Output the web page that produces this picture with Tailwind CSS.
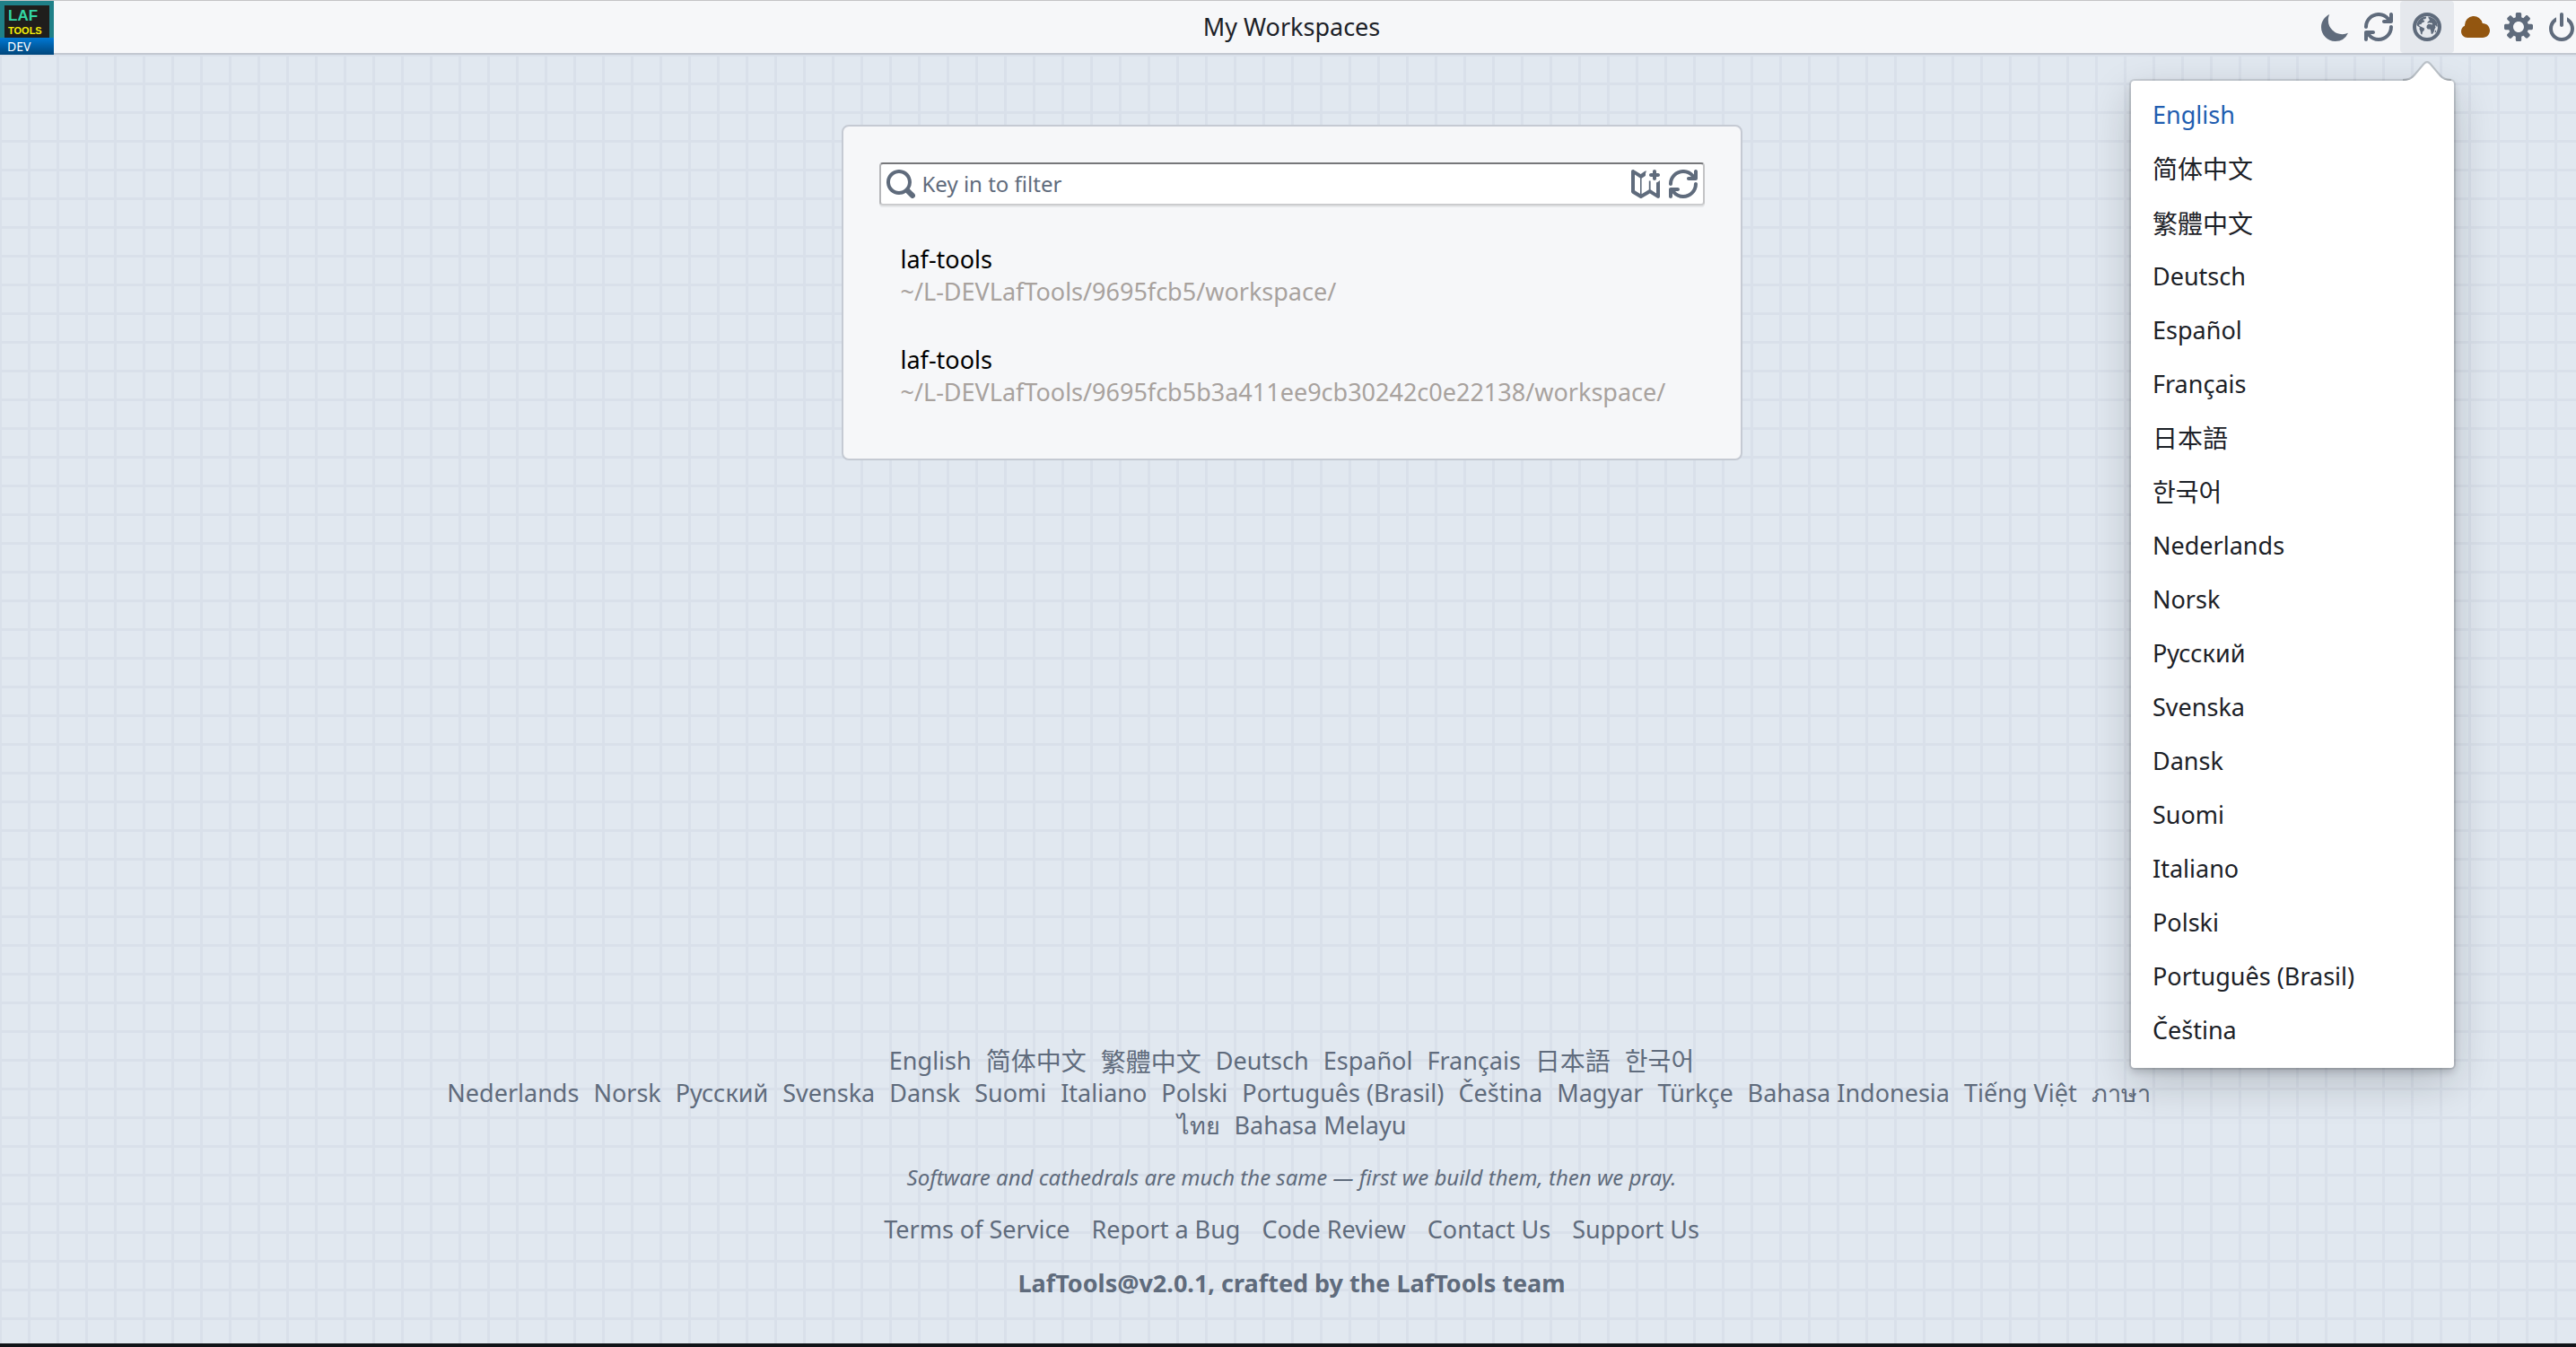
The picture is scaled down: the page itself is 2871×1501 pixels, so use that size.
<!DOCTYPE html>
<html lang="en">
<head>
<meta charset="utf-8">
<meta name="viewport" content="width=device-width, initial-scale=1">
<title>My Workspaces</title>
<script src="https://cdn.jsdelivr.net/npm/@tailwindcss/browser@4"></script>
</head>
<body class="flex min-h-screen flex-col overflow-x-hidden border-b-4 border-[#111418] bg-[#e1e8f0] bg-[linear-gradient(#d9e0ea_3px,transparent_3px),linear-gradient(90deg,#d9e0ea_3px,transparent_3px)] bg-[size:32px_32px] bg-[position:0px_28px,-1px_0px] font-['Noto_Sans','Noto_Sans_CJK_SC',sans-serif] text-[27px] leading-9 text-[#1c2127]">

<svg class="hidden" aria-hidden="true">
  <symbol id="refresh" viewBox="0 0 16 16"><path d="M14.99 6.99c-.55 0-1 .45-1 1 0 3.31-2.69 6-6 6-1.77 0-3.36-.78-4.46-2h1.46c.55 0 1-.45 1-1s-.45-1-1-1h-4c-.55 0-1 .45-1 1v4c0 .55.45 1 1 1s1-.45 1-1v-1.74a7.95 7.95 0 006 2.74c4.42 0 8-3.58 8-8 0-.55-.45-1-1-1zm0-7c-.55 0-1 .45-1 1v1.74a7.95 7.95 0 00-6-2.74c-4.42 0-8 3.58-8 8 0 .55.45 1 1 1s1-.45 1-1c0-3.31 2.69-6 6-6 1.77 0 3.36.78 4.46 2h-1.46c-.55 0-1 .45-1 1s.45 1 1 1h4c.55 0 1-.45 1-1v-4c0-.55-.45-1-1-1z"/></symbol>
</svg>

<header class="relative z-10 flex h-[61px] shrink-0 items-stretch border-t border-b-2 border-t-[#c4c4c6] border-b-[#c3c8d1] bg-[#f6f7f9]">
  <a href="#" aria-label="LafTools DEV" class="-mb-0.5 flex h-[60px] w-[60px] shrink-0 flex-col bg-[#1f8088] font-['Liberation_Sans',sans-serif]">
    <span class="mx-[5px] mt-[5px] flex h-9 flex-col bg-[#1f1e1c] pt-1 pl-1 font-bold">
      <span class="text-[17px] leading-4 text-[#33d6a4]">LAF</span>
      <span class="text-[11px] leading-4 text-[#f5ee0a]">TOOLS</span>
    </span>
    <span class="flex h-[19px] items-center bg-linear-to-b from-[#0078d4] to-[#00467c] pl-2 font-['Noto_Sans',sans-serif] text-sm leading-none text-white">DEV</span>
  </a>
  <div class="relative flex flex-1 items-center justify-end">
    <h1 class="pointer-events-none absolute inset-y-0 -left-[60px] right-0 flex items-center justify-center pl-2">My Workspaces</h1>
    <nav class="flex h-full items-center text-[#5f6b7c]" aria-label="Tools">
      <button type="button" aria-label="Dark mode" class="flex h-full w-12 items-center justify-center"><svg class="size-8 fill-current" viewBox="0 0 16 16"><path d="M15 11.38A7.835 7.835 0 017.85 16C3.51 16 0 12.49 0 8.15 0 4.97 1.89 2.23 4.62 1c-.45.99-.7 2.08-.7 3.23a7.85 7.85 0 007.85 7.85c1.15 0 2.24-.25 3.23-.7z"/></svg></button>
      <button type="button" aria-label="Refresh" class="flex h-full w-12 items-center justify-center"><svg class="size-8 fill-current"><use href="#refresh"/></svg></button>
      <div class="relative h-full">
        <button type="button" aria-label="Language" aria-expanded="true" class="flex h-full w-[60px] items-center justify-center rounded bg-[#e5e8ed]">
          <svg class="size-8" viewBox="0 0 16 16"><circle cx="8" cy="8" r="7" fill="none" stroke="currentColor" stroke-width="2"/><path fill="currentColor" d="M2.6 5.6C3.3 4 4.600 2.900 6 2.500L7.400 2.200 7.600 3 6.800 3.800 6.200 3.500 5.800 4.200 6.700 4.500 6.200 5.400 5.300 5.600 4.600 6.600 3.900 6.500 3.500 7.100 4.300 7.700 5.200 8.100 6.600 8.900 6.300 10 5.500 10.800 5.200 12.300 4.600 12 4.200 10.300 3.700 9.200 3.900 8.200 2.900 7.600 2.200 7zM8.600 2.300 10.600 2.700 12.200 3.700 13.400 5.300 13.900 7.200 13.600 8.200 13 7.200 12.400 7.300 12.800 8.300 12.200 9.200 11.900 10.500 11 12 10.300 11.800 10.100 10.200 9.700 9.300 8.400 9.200 7.700 8.400 7.900 7.100 8.800 6.400 10 6.500 10.900 6.800 11 6.300 10.400 5.700 9.700 5.900 9.100 5.600 8.300 6 8.200 5.400 8.900 4.700 9.600 4 9 3.600z"/><path d="M12.4 10.300l.6-.6.1 1-.7.7z" fill="currentColor"/></svg>
        </button>
        <div role="menu" aria-label="Language" class="absolute top-[89px] right-0 flex w-[360px] flex-col rounded-[4px] bg-white pt-2 pb-3 text-[#1c2127] shadow-[0_0_0_2px_rgba(17,20,24,0.1),0_4px_8px_rgba(17,20,24,0.2),0_16px_48px_rgba(17,20,24,0.2)]">
          <svg class="absolute -top-[23px] right-0 h-[25px] w-[60px]" viewBox="0 0 60 25" aria-hidden="true"><path d="M3 23C9 23 13 21 16 18L27 5Q30 2 33 5L44 18C47 21 51 23 57 23V25H3z" fill="#fff"/><path d="M3 22C9 22 13 20 15.500 17L26.500 4Q30 0 33.500 4L44.500 17C47 20 51 22 57 22" fill="none" stroke="#111418" stroke-opacity=".18" stroke-width="2"/></svg>
          <a href="#" role="menuitem" class="flex h-[60px] items-center px-6 text-[#215db0]">English</a>
          <a href="#" role="menuitem" lang="zh-CN" class="flex h-[60px] items-center px-6 text-[28px]">简体中文</a>
          <a href="#" role="menuitem" lang="zh-TW" class="flex h-[60px] items-center px-6 font-['Noto_Sans_CJK_SC',sans-serif] text-[28px]">繁體中文</a>
          <a href="#" role="menuitem" class="flex h-[60px] items-center px-6">Deutsch</a>
          <a href="#" role="menuitem" class="flex h-[60px] items-center px-6">Español</a>
          <a href="#" role="menuitem" class="flex h-[60px] items-center px-6">Français</a>
          <a href="#" role="menuitem" class="flex h-[60px] items-center px-6 text-[28px]">日本語</a>
          <a href="#" role="menuitem" class="flex h-[60px] items-center px-6 text-[28px]">한국어</a>
          <a href="#" role="menuitem" class="flex h-[60px] items-center px-6">Nederlands</a>
          <a href="#" role="menuitem" class="flex h-[60px] items-center px-6">Norsk</a>
          <a href="#" role="menuitem" class="flex h-[60px] items-center px-6">Русский</a>
          <a href="#" role="menuitem" class="flex h-[60px] items-center px-6">Svenska</a>
          <a href="#" role="menuitem" class="flex h-[60px] items-center px-6">Dansk</a>
          <a href="#" role="menuitem" class="flex h-[60px] items-center px-6">Suomi</a>
          <a href="#" role="menuitem" class="flex h-[60px] items-center px-6">Italiano</a>
          <a href="#" role="menuitem" class="flex h-[60px] items-center px-6">Polski</a>
          <a href="#" role="menuitem" class="flex h-[60px] items-center px-6">Português (Brasil)</a>
          <a href="#" role="menuitem" class="flex h-[60px] items-center px-6">Čeština</a>
        </div>
      </div>
      <button type="button" aria-label="Cloud" class="flex h-full w-12 items-center justify-center text-[#935610]"><svg class="size-8 fill-current" viewBox="0 0 16 16"><path d="M12 6c-.03 0-.07 0-.1.010A5 5 0 002 7c0 .11.010.22.020.33A3.510 3.510 0 000 10.500C0 12.430 1.570 14 3.500 14H12c2.210 0 4-1.790 4-4s-1.790-4-4-4z"/></svg></button>
      <button type="button" aria-label="Settings" class="flex h-full w-12 items-center justify-center"><svg class="size-8 fill-current" viewBox="0 0 16 16"><path d="M15.190 6.390h-1.850c-.11-.37-.27-.71-.45-1.040l1.360-1.360c.31-.31.31-.82 0-1.130l-1.130-1.130c-.31-.31-.82-.31-1.130 0l-1.360 1.360c-.33-.17-.67-.33-1.040-.44V.79c0-.44-.36-.8-.8-.8h-1.600c-.44 0-.8.36-.8.8v1.860c-.39.12-.75.28-1.100.47l-1.300-1.300c-.3-.3-.79-.3-1.090 0L1.820 2.910c-.3.3-.3.79 0 1.090l1.300 1.300c-.2.34-.36.7-.48 1.090H.79c-.44 0-.8.36-.8.8v1.600c0 .44.36.8.8.8h1.850c.11.37.27.71.45 1.040l-1.360 1.360c-.31.31-.31.82 0 1.130l1.130 1.130c.31.31.82.31 1.130 0l1.360-1.360c.33.18.67.33 1.040.44v1.860c0 .44.36.8.8.8h1.600c.44 0 .8-.36.8-.8v-1.860c.39-.12.75-.28 1.100-.47l1.300 1.300c.3.3.79.3 1.090 0l1.090-1.090c.3-.3.3-.79 0-1.090l-1.300-1.300c.19-.35.36-.71.48-1.100h1.850c.44 0 .8-.36.8-.8v-1.600a.816.816 0 00-.81-.79zm-7.200 4.600c-1.660 0-3-1.340-3-3s1.340-3 3-3 3 1.340 3 3-1.340 3-3 3z"/></svg></button>
      <button type="button" aria-label="Log out" class="flex h-full w-10 items-center justify-end"><svg class="size-8 fill-current" viewBox="0 0 16 16"><path d="M8 8c.55 0 1-.45 1-1V1c0-.55-.45-1-1-1S7 .45 7 1v6c0 .55.45 1 1 1zm3-5.320v2.340c1.210.91 2 2.350 2 3.980 0 2.760-2.240 5-5 5s-5-2.240-5-5c0-1.630.79-3.060 2-3.980V2.680C2.640 3.810 1 6.210 1 9c0 3.870 3.130 7 7 7s7-3.130 7-7c0-2.790-1.640-5.190-4-6.320z"/></svg></button>
    </nav>
  </div>
</header>

<main class="flex justify-center pt-[78px] pl-2">
  <section class="w-[1004px] rounded-lg border-2 border-[#c5cad3] bg-[#f6f7f9] px-10 pt-10 pb-14" aria-label="Workspaces">
    <label class="flex h-12 items-center gap-2 rounded border-2 border-t-[#76777a] border-r-[#c3c4c6] border-b-[#cbccce] border-l-[#b4b5b8] bg-white px-1.5 text-[#5f6b7c] shadow-[0_2px_0_#e5e7e9]">
      <svg class="size-8 shrink-0 fill-current" viewBox="0 0 16 16" aria-hidden="true"><path d="M15.550 13.430l-2.670-2.680a6.940 6.940 0 001.110-3.760c0-3.870-3.130-7-7-7s-7 3.130-7 7 3.130 7 7 7c1.390 0 2.680-.42 3.760-1.110l2.680 2.670a1.498 1.498 0 102.120-2.120zm-8.560-1.440c-2.760 0-5-2.240-5-5s2.240-5 5-5 5 2.240 5 5-2.240 5-5 5z"/></svg>
      <input type="text" aria-label="Filter workspaces" placeholder="Key in to filter" class="h-full min-w-0 flex-1 bg-transparent pb-0.5 text-2xl outline-none placeholder:text-[#5f6b7c]">
      <span class="flex gap-2.5">
        <button type="button" aria-label="New workspace" class="size-8"><svg class="size-8 fill-current" viewBox="0 0 16 16"><path fill-rule="evenodd" d="M0 1C0 .2.900-.300 1.600.200L5.300 2.500 7.600.900 8.600.700C8.200 1.300 7.900 2 8 2.900L7.900 3.500 5.800 4.900V13.600L9.900 11.100V6.200H10.800V11.100L14 13.300V7.300C14.800 7 15.300 6.500 16 6V15C16 15.800 15.100 16.300 14.400 15.800L10.400 13.200 5.900 15.900Q5.400 16.200 4.900 15.900L.500 13.200Q0 12.900 0 12.300zM2 2.800V11.600L5 13.500V4.800z"/><path d="M13 0c.55 0 1 .45 1 1v1h1c.55 0 1 .45 1 1s-.45 1-1 1h-1v1c0 .55-.45 1-1 1s-1-.45-1-1V4h-1c-.55 0-1-.45-1-1s.45-1 1-1h1V1c0-.55.45-1 1-1z"/></svg></button>
        <button type="button" aria-label="Refresh workspaces" class="size-8"><svg class="size-8 fill-current"><use href="#refresh"/></svg></button>
      </span>
    </label>
    <ul class="mt-[42px] flex flex-col gap-10 px-6">
      <li><a href="#" class="block text-black">laf-tools<span class="block text-[#a8a29e]">~/L-DEVLafTools/9695fcb5/workspace/</span></a></li>
      <li><a href="#" class="block text-black">laf-tools<span class="block text-[#a8a29e]">~/L-DEVLafTools/9695fcb5b3a411ee9cb30242c0e22138/workspace/</span></a></li>
    </ul>
  </section>
</main>

<footer class="mt-auto flex flex-col items-center pb-[49px] pl-2 text-center text-[#5f6b7c]">
  <nav aria-label="Languages" class="flex flex-col items-center">
    <div class="flex h-9 gap-4">
      <a href="#">English</a><a href="#" class="text-[28px]">简体中文</a><a href="#" class="font-['Noto_Sans_CJK_SC',sans-serif] text-[28px]">繁體中文</a><a href="#">Deutsch</a><a href="#">Español</a><a href="#">Français</a><a href="#" class="text-[28px]">日本語</a><a href="#" class="text-[28px]">한국어</a>
    </div>
    <div class="flex h-9 gap-4 pl-4">
      <a href="#">Nederlands</a><a href="#">Norsk</a><a href="#">Русский</a><a href="#">Svenska</a><a href="#">Dansk</a><a href="#">Suomi</a><a href="#">Italiano</a><a href="#">Polski</a><a href="#">Português (Brasil)</a><a href="#">Čeština</a><a href="#">Magyar</a><a href="#">Türkçe</a><a href="#">Bahasa Indonesia</a><a href="#">Tiếng Việt</a><a href="#">ภาษา</a>
    </div>
    <div class="flex h-9 gap-4">
      <a href="#">ไทย</a><a href="#">Bahasa Melayu</a>
    </div>
  </nav>
  <p class="mt-[22px] text-2xl leading-9 italic">Software and cathedrals are much the same — first we build them, then we pray.</p>
  <nav aria-label="Support" class="mt-[22px] flex gap-6">
    <a href="#">Terms of Service</a><a href="#">Report a Bug</a><a href="#">Code Review</a><a href="#">Contact Us</a><a href="#">Support Us</a>
  </nav>
  <p class="mt-6 font-bold">LafTools@v2.0.1, crafted by the LafTools team</p>
</footer>
</body>
</html>
